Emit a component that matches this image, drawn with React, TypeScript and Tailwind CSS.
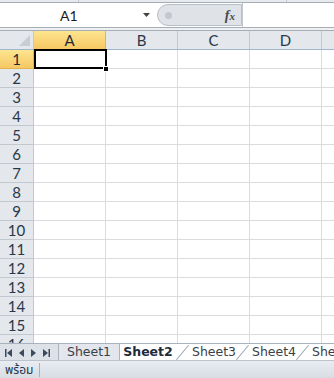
import React from "react";

const cols = ["A", "B", "C", "D"];
const rows = Array.from({ length: 16 }, (_, i) => i + 1);

const headFont = { fontFamily: "Lato, 'Open Sans', sans-serif" };

const NavArrows: React.FC = () => (
  <div className="flex items-center gap-[7px] pl-[5px] w-[58px] h-[17px] shrink-0 text-[#3b4a5c]">
    <svg width="7" height="8" viewBox="0 0 7 8">
      <rect x="0" y="0" width="1.5" height="8" fill="currentColor" />
      <path d="M7 0 L2 4 L7 8 Z" fill="currentColor" />
    </svg>
    <svg width="5" height="8" viewBox="0 0 5 8">
      <path d="M5 0 L0 4 L5 8 Z" fill="currentColor" />
    </svg>
    <svg width="5" height="8" viewBox="0 0 5 8">
      <path d="M0 0 L5 4 L0 8 Z" fill="currentColor" />
    </svg>
    <svg width="7" height="8" viewBox="0 0 7 8">
      <path d="M0 0 L5 4 L0 8 Z" fill="currentColor" />
      <rect x="5.5" y="0" width="1.5" height="8" fill="currentColor" />
    </svg>
  </div>
);

const Tab: React.FC<{ label: string; active?: boolean; first?: boolean }> = ({
  label,
  active,
  first,
}) => (
  <div
    className={
      "relative h-[17px] flex items-center justify-center text-[12.5px] leading-none shrink-0 " +
      (first
        ? "w-[62px] bg-[#e3e7ed] border border-t-0 border-[#a9b3bf] text-[#3a3f47]"
        : active
        ? "w-[60px] bg-white font-bold text-[#1e2b3a] border-b border-[#a9b3bf]"
        : "w-[60px] bg-white text-[#3a3f47] border-b border-[#a9b3bf]")
    }
    style={{ fontFamily: "'DejaVu Sans', Verdana, sans-serif" }}
  >
    {!first && !active && (
      <span className="absolute left-[2px] top-[-1px] h-[19px] w-px bg-[#9aa5b2] rotate-[40deg]" />
    )}
    <span className={first ? "" : active ? "pr-[4px]" : "pl-[8px]"}>{label}</span>
  </div>
);

export default function App() {
  return (
    <div className="w-[334px] h-[378px] overflow-hidden bg-white flex flex-col select-none">
      {/* ribbon remnant */}
      <div className="h-[3px] bg-[#e6e9ee] border-b border-[#a7adb5] flex shrink-0">
        <div className="w-[79px] border-r border-[#c4c9d0]" />
        <div className="w-[208px] border-r border-[#c4c9d0]" />
      </div>

      {/* formula bar */}
      <div className="h-[24px] flex items-center shrink-0 bg-white">
        <div className="w-[157px] h-full flex items-center relative shrink-0">
          <span className="absolute left-[60px] text-[14px] text-[#1b1b1b]" style={headFont}>
            A1
          </span>
          <svg className="absolute left-[143px] top-[10px]" width="7" height="4" viewBox="0 0 7 4">
            <path d="M0 0 H7 L3.5 4 Z" fill="#444" />
          </svg>
        </div>
        <div className="w-[85px] h-[22px] shrink-0 rounded-l-full bg-[#dfe2e7] border border-[#b9bfc8] flex items-center relative">
          <span className="absolute left-[7px] w-[7px] h-[7px] rounded-full bg-[#c3c8cf]" />
          <span
            className="absolute right-[6px] text-[14px] italic font-bold text-[#4a4a4a]"
            style={{ fontFamily: "'Liberation Serif', serif" }}
          >
            f<span className="text-[11px]">x</span>
          </span>
        </div>
        <div className="flex-1 h-full border-l border-[#c4c9d0]" />
      </div>

      {/* separator */}
      <div className="h-[4px] bg-[#eef0f3] border-y border-[#a7adb5] shrink-0" />

      {/* grid */}
      <div className="h-[312px] overflow-hidden shrink-0">
        <div className="flex h-[19px] border-b border-[#9eb6ce]">
          <div className="w-[34px] shrink-0 bg-[#e4e7eb] border-r border-[#c3c8ce] relative">
            <svg className="absolute right-[3px] bottom-[3px]" width="11" height="11" viewBox="0 0 11 11">
              <path d="M11 0 V11 H0 Z" fill="#c8cdd3" />
            </svg>
          </div>
          {cols.map((c, i) => (
            <div
              key={c}
              className={
                "w-[72px] shrink-0 flex items-center justify-center text-[15px] border-r " +
                (i === 0
                  ? "bg-gradient-to-b from-[#fde58f] to-[#f6c863] border-[#e2b44a] text-[#1f2a36]"
                  : "bg-[#e4e7eb] border-[#c3c8ce] text-[#27384a]")
              }
              style={headFont}
            >
              {c}
            </div>
          ))}
          <div className="flex-1 bg-[#e4e7eb]" />
        </div>

        {rows.map((r) => (
          <div key={r} className="flex h-[19px]">
            <div
              className={
                "w-[34px] shrink-0 flex items-center justify-center text-[15px] border-r border-b " +
                (r === 1
                  ? "bg-gradient-to-b from-[#fde58f] to-[#f6c863] border-[#e2b44a] text-[#1f2a36]"
                  : "bg-[#e4e7eb] border-[#c3c8ce] text-[#27384a]")
              }
              style={headFont}
            >
              {r}
            </div>
            {cols.map((c, i) => (
              <div
                key={c}
                className={
                  "w-[72px] shrink-0 border-r border-b border-[#dadcdd] " +
                  (r === 1 && i === 0 ? "relative z-10" : "")
                }
              >
                {r === 1 && i === 0 && (
                  <>
                    <span className="absolute left-0 top-[-1px] right-[-2px] bottom-[-1px] border-2 border-black" />
                    <span className="absolute right-[-4px] bottom-[-4px] w-[6px] h-[6px] bg-black border border-white" />
                  </>
                )}
              </div>
            ))}
            <div className="flex-1 border-b border-[#dadcdd]" />
          </div>
        ))}
      </div>

      {/* sheet tabs */}
      <div className="h-[17px] flex items-start bg-[#dde2e8] border-t border-[#a9b3bf] shrink-0 overflow-hidden">
        <NavArrows />
        <div className="flex h-[17px] shrink-0">
          <Tab label="Sheet1" first />
          <Tab label="Sheet2" active />
          <Tab label="Sheet3" />
          <Tab label="Sheet4" />
          <Tab label="Sheet5" />
        </div>
      </div>

      {/* status bar */}
      <div className="h-[18px] flex items-center bg-gradient-to-b from-[#e9edf2] to-[#d8dde4] border-t border-[#bcc3cc] shrink-0">
        <span
          className="pl-[5px] w-[40px] text-[12px] text-[#27384a] border-r border-[#aab2bd] leading-[14px]"
          style={{ fontFamily: "'Noto Sans Thai', 'Noto Sans', 'DejaVu Sans', sans-serif" }}
        >
          พร้อม
        </span>
      </div>
    </div>
  );
}
